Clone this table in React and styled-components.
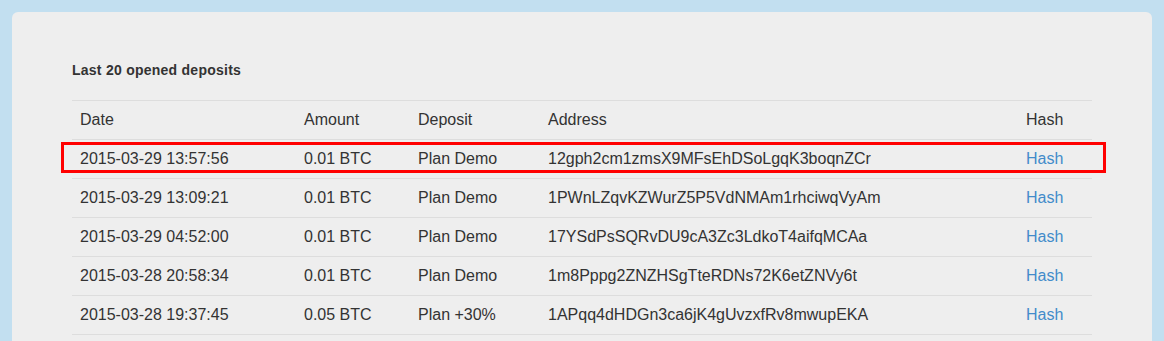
import React from "react";
import styled, { createGlobalStyle } from "styled-components";

const Global = createGlobalStyle`
  html, body { margin: 0; padding: 0; }
  body {
    background: #c2dff0;
    font-family: "Liberation Sans", Arial, sans-serif;
    color: #333;
  }
`;

const Card = styled.div`
  margin: 12px 12px 0 12px;
  width: 1140px;
  box-sizing: border-box;
  background: #eeeeee;
  border-radius: 6px;
  padding: 49px 60px 40px 60px;
`;

const Title = styled.h4`
  margin: 0 0 21px 0;
  font-size: 14px;
  line-height: 18px;
  letter-spacing: 0.25px;
  font-weight: bold;
  color: #333;
`;

const TableWrap = styled.div`
  position: relative;
`;

const Table = styled.table`
  width: 100%;
  border-collapse: collapse;
  table-layout: fixed;
  font-size: 16px;
  line-height: 22px;
`;

const Th = styled.th`
  text-align: left;
  font-weight: normal;
  padding: 8px;
  border-top: 1px solid #dddddd;
  white-space: nowrap;
`;

const Td = styled.td`
  padding: 8px;
  border-top: 1px solid #dddddd;
  white-space: nowrap;
`;

const Row = styled.tr`
  &:last-child td { border-bottom: 1px solid #dddddd; }
`;

const Link = styled.a`
  color: #428bca;
  text-decoration: none;
`;

const Highlight = styled.div`
  position: absolute;
  left: -11px;
  top: 42px;
  width: 1045px;
  height: 31px;
  box-sizing: border-box;
  border: 3px solid #ff0000;
  pointer-events: none;
`;

const rows = [
  ["2015-03-29 13:57:56", "0.01 BTC", "Plan Demo", "12gph2cm1zmsX9MFsEhDSoLgqK3boqnZCr"],
  ["2015-03-29 13:09:21", "0.01 BTC", "Plan Demo", "1PWnLZqvKZWurZ5P5VdNMAm1rhciwqVyAm"],
  ["2015-03-29 04:52:00", "0.01 BTC", "Plan Demo", "17YSdPsSQRvDU9cA3Zc3LdkoT4aifqMCAa"],
  ["2015-03-28 20:58:34", "0.01 BTC", "Plan Demo", "1m8Pppg2ZNZHSgTteRDNs72K6etZNVy6t"],
  ["2015-03-28 19:37:45", "0.05 BTC", "Plan +30%", "1APqq4dHDGn3ca6jK4gUvzxfRv8mwupEKA"],
];

export default function App() {
  return (
    <>
      <Global />
      <Card>
        <Title>Last 20 opened deposits</Title>
        <TableWrap>
          <Table>
            <colgroup>
              <col style={{ width: 224 }} />
              <col style={{ width: 114 }} />
              <col style={{ width: 130 }} />
              <col style={{ width: 478 }} />
              <col style={{ width: 74 }} />
            </colgroup>
            <thead>
              <tr>
                <Th>Date</Th>
                <Th>Amount</Th>
                <Th>Deposit</Th>
                <Th>Address</Th>
                <Th>Hash</Th>
              </tr>
            </thead>
            <tbody>
              {rows.map((r) => (
                <Row key={r[3]}>
                  <Td>{r[0]}</Td>
                  <Td>{r[1]}</Td>
                  <Td>{r[2]}</Td>
                  <Td>{r[3]}</Td>
                  <Td>
                    <Link href="#">Hash</Link>
                  </Td>
                </Row>
              ))}
            </tbody>
          </Table>
          <Highlight />
        </TableWrap>
      </Card>
    </>
  );
}
